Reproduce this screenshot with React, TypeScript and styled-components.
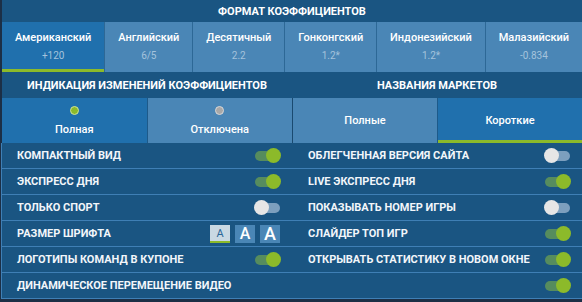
import { Fragment } from 'react'
import styled, { createGlobalStyle } from 'styled-components'

const GlobalStyle = createGlobalStyle`
  html, body {
    margin: 0;
    padding: 0;
    background: #1c2f46;
    font-family: Roboto, 'Liberation Sans', Arial, sans-serif;
  }
`

const Panel = styled.div`
  width: 580px;
  margin-left: 2px;
  background: #1a5582;
  color: #fff;
`

const Title = styled.div`
  height: 22px;
  display: flex;
  align-items: center;
  justify-content: center;
  font-size: 11px;
  font-weight: 700;
  text-transform: uppercase;
`

const Tabs = styled.div`
  display: flex;
  height: 50px;
  gap: 1px;
  background: #2d6896;
`

const Tab = styled.div<{ active?: boolean }>`
  flex: 1 1 auto;
  display: flex;
  flex-direction: column;
  align-items: center;
  padding-top: 9px;
  box-sizing: border-box;
  background: ${({ active }) => (active ? '#2070ad' : '#4a86b6')};
  border-bottom: 3px solid ${({ active }) => (active ? '#8cba2a' : '#4a86b6')};
`

const TabName = styled.span`
  font-size: 11px;
  font-weight: 500;
  line-height: 13px;
`

const TabValue = styled.span`
  margin-top: 6px;
  font-size: 10px;
  line-height: 12px;
  color: #a4c3dc;
`

const Sections = styled.div`
  display: grid;
  grid-template-columns: 290px 290px;
`

const SectionHeader = styled.div`
  height: 26px;
  display: flex;
  align-items: center;
  justify-content: center;
  font-size: 11px;
  font-weight: 700;
  text-transform: uppercase;
`

const Options = styled.div<{ divided?: boolean }>`
  display: flex;
  gap: 1px;
  background: #1d5a8a;
  border-left: ${({ divided }) => (divided ? '1px solid #1a4a70' : 'none')};
`

const Option = styled.div<{ active?: boolean; underline?: boolean }>`
  flex: 1;
  height: 45px;
  box-sizing: border-box;
  display: flex;
  flex-direction: column;
  align-items: center;
  justify-content: center;
  gap: 8px;
  padding-top: 3px;
  font-size: 11px;
  font-weight: 500;
  background: ${({ active }) => (active ? '#2070ad' : '#4a86b6')};
  border-bottom: 3px solid
    ${({ underline, active }) =>
      underline ? '#8cba2a' : active ? '#2070ad' : '#4a86b6'};
`

const Dot = styled.span<{ on?: boolean }>`
  width: 7px;
  height: 7px;
  border-radius: 50%;
  background: ${({ on }) => (on ? '#8cba2a' : '#a8a8a8')};
  border: 1px solid ${({ on }) => (on ? '#cfe49a' : '#d8d8d8')};
`

const List = styled.div`
  display: grid;
  grid-template-columns: 290px 290px;
  border-left: 1px solid #3f7fb5;
  margin-left: -1px;
`

const Row = styled.div<{ right?: boolean }>`
  height: 25px;
  display: flex;
  align-items: center;
  justify-content: space-between;
  border-bottom: 1px solid #3f7fb5;
  padding: 0 12px 0 ${({ right }) => (right ? '16px' : '15px')};
  font-size: 11px;
  font-weight: 700;
  text-transform: uppercase;
  color: #f2f6fa;
`

const Toggle = styled.span<{ on?: boolean }>`
  position: relative;
  width: 25px;
  height: 10px;
  border-radius: 5px;
  background: ${({ on }) => (on ? '#568c5e' : '#7c9fbe')};

  &::after {
    content: '';
    position: absolute;
    top: -3px;
    ${({ on }) => (on ? 'right: -1px;' : 'left: -1px;')}
    width: 15px;
    height: 15px;
    border-radius: 50%;
    background: ${({ on }) => (on ? '#8cba2a' : '#e6e6e6')};
  }
`

const SizeButtons = styled.div`
  display: flex;
  gap: 5px;
`

const SizeButton = styled.span<{ active?: boolean; size: number }>`
  width: 20px;
  height: 18px;
  box-sizing: border-box;
  display: flex;
  align-items: center;
  justify-content: center;
  padding-top: 2px;
  font-size: ${({ size }) => size}px;
  font-weight: ${({ active }) => (active ? 400 : 500)};
  background: ${({ active }) => (active ? '#c9d8e3' : '#4a86b6')};
  color: ${({ active }) => (active ? '#2a6597' : '#fff')};
  border-bottom: 2px solid ${({ active }) => (active ? '#8cba2a' : '#4a86b6')};
`

const formats = [
  { name: 'Американский', value: '+120', active: true },
  { name: 'Английский', value: '6/5' },
  { name: 'Десятичный', value: '2.2' },
  { name: 'Гонконгский', value: '1.2*' },
  { name: 'Индонезийский', value: '1.2*' },
  { name: 'Малазийский', value: '-0.834' },
]

type Setting = { label: string; on?: boolean; sizes?: boolean; toggle?: boolean }

const rows: [Setting, Setting][] = [
  [
    { label: 'Компактный вид', on: true, toggle: true },
    { label: 'Облегченная версия сайта', toggle: true },
  ],
  [
    { label: 'Экспресс дня', on: true, toggle: true },
    { label: 'Live экспресс дня', on: true, toggle: true },
  ],
  [
    { label: 'Только спорт', toggle: true },
    { label: 'Показывать номер игры', toggle: true },
  ],
  [
    { label: 'Размер шрифта', sizes: true },
    { label: 'Слайдер топ игр', on: true, toggle: true },
  ],
  [
    { label: 'Логотипы команд в купоне', on: true, toggle: true },
    { label: 'Открывать статистику в новом окне', on: true, toggle: true },
  ],
  [
    { label: 'Динамическое перемещение видео' },
    { label: '', on: true, toggle: true },
  ],
]

function SettingRow({ item, right }: { item: Setting; right?: boolean }) {
  return (
    <Row right={right}>
      <span>{item.label}</span>
      {item.toggle && <Toggle on={item.on} />}
      {item.sizes && (
        <SizeButtons>
          <SizeButton active size={11}>
            A
          </SizeButton>
          <SizeButton size={16}>A</SizeButton>
          <SizeButton size={18}>A</SizeButton>
        </SizeButtons>
      )}
    </Row>
  )
}

export default function App() {
  return (
    <>
      <GlobalStyle />
      <Panel>
        <Title>Формат коэффициентов</Title>
        <Tabs>
          {formats.map((f) => (
            <Tab key={f.name} active={f.active}>
              <TabName>{f.name}</TabName>
              <TabValue>{f.value}</TabValue>
            </Tab>
          ))}
        </Tabs>
        <Sections>
          <div>
            <SectionHeader>Индикация изменений коэффициентов</SectionHeader>
            <Options>
              <Option active>
                <Dot on />
                Полная
              </Option>
              <Option>
                <Dot />
                Отключена
              </Option>
            </Options>
          </div>
          <div>
            <SectionHeader>Названия маркетов</SectionHeader>
            <Options divided>
              <Option>Полные</Option>
              <Option active underline>
                Короткие
              </Option>
            </Options>
          </div>
        </Sections>
        <List>
          {rows.map(([l, r], i) => (
            <Fragment key={i}>
              <SettingRow item={l} />
              <SettingRow item={r} right />
            </Fragment>
          ))}
        </List>
      </Panel>
    </>
  )
}
